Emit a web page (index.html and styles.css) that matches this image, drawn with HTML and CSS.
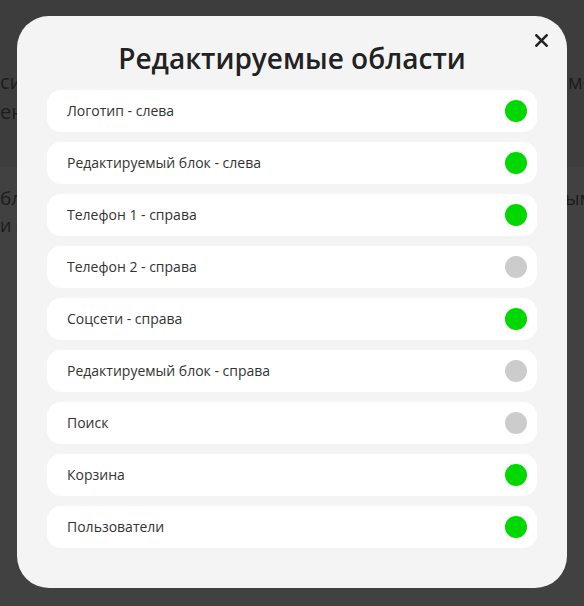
FILE: index.html
```html
<!DOCTYPE html>
<html lang="ru">
<head>
<meta charset="utf-8">
<link rel="stylesheet" href="styles.css">
</head>
<body>
<div class="page">
  <section class="bg-sec bg-top">
    <div class="bg-line l1"><span class="lt">сирование шаблона</span><span class="r">можно</span></div>
    <div class="bg-line l2"><span class="lt">ения сайта</span></div>
  </section>
  <section class="bg-sec bg-bottom">
    <div class="bg-line l3"><span class="lt">блоки шаблона</span><span class="r">ымые</span></div>
    <div class="bg-line l4"><span class="lt">и страницы</span></div>
  </section>
</div>
<div class="overlay">
  <div class="modal">
    <button class="close" aria-label="Закрыть">
      <svg width="13" height="13" viewBox="0 0 13 13"><path d="M1.4 1.4 L11.6 11.6 M11.6 1.4 L1.4 11.6" stroke="#222" stroke-width="2.5" stroke-linecap="square" fill="none"/></svg>
    </button>
    <h1 class="title">Редактируемые области</h1>
    <ul class="list">
      <li class="row"><span>Логотип - слева</span><i class="dot on"></i></li>
      <li class="row"><span>Редактируемый блок - слева</span><i class="dot on"></i></li>
      <li class="row"><span>Телефон 1 - справа</span><i class="dot on"></i></li>
      <li class="row"><span>Телефон 2 - справа</span><i class="dot off"></i></li>
      <li class="row"><span>Соцсети - справа</span><i class="dot on"></i></li>
      <li class="row"><span>Редактируемый блок - справа</span><i class="dot off"></i></li>
      <li class="row"><span>Поиск</span><i class="dot off"></i></li>
      <li class="row"><span>Корзина</span><i class="dot on"></i></li>
      <li class="row"><span>Пользователи</span><i class="dot on"></i></li>
    </ul>
  </div>
</div>
</body>
</html>
```
FILE: styles.css
```css
* { box-sizing: border-box; }
html, body { margin: 0; padding: 0; }
body {
  width: 584px;
  height: 606px;
  overflow: hidden;
  background: #404040;
  font-family: "Open Sans", "Liberation Sans", sans-serif;
}
.page { height: 606px; }
.bg-sec { overflow: hidden; }
.bg-top { background: #3d3d3d; height: 167px; padding-top: 67px; }
.bg-bottom { background: #414141; height: 439px; padding-top: 18px; }
.bg-line {
  display: flex;
  color: #1c1c1c;
  font-size: 20px;
  white-space: nowrap;
  width: 700px;
}
.bg-line .lt {
  flex: none;
  width: 568px;
  overflow: hidden;
}
.bg-line .r { flex: none; }
.l1 { height: 30px; line-height: 30px; }
.l2 { height: 30px; line-height: 30px; }
.l3 { height: 27px; line-height: 27px; font-size: 19px; }
.l3 .lt { width: 565px; }
.l4 { height: 27px; line-height: 27px; font-size: 18px; }

.overlay {
  position: fixed;
  inset: 0;
  display: flex;
  align-items: flex-start;
  justify-content: flex-start;
  padding: 16px 17px;
}
.modal {
  position: relative;
  width: 550px;
  height: 572px;
  background: #f4f4f4;
  border-radius: 32px;
  padding: 24px 30px 40px;
}
.close {
  position: absolute;
  top: 18px;
  right: 19px;
  width: 13px;
  height: 13px;
  padding: 0;
  border: 0;
  background: none;
  display: block;
}
.close svg { display: block; }
.title {
  margin: 0 0 12px;
  text-align: center;
  font-size: 28px;
  font-weight: 600;
  line-height: 38px;
  color: #222;
  position: relative;
  top: -1px;
}
.list {
  list-style: none;
  margin: 0;
  padding: 0;
  display: flex;
  flex-direction: column;
  gap: 10px;
}
.row {
  height: 42px;
  background: #fff;
  border-radius: 14px;
  display: flex;
  align-items: center;
  justify-content: space-between;
  padding: 0 10px 0 20px;
  font-size: 14px;
  line-height: 20px;
  color: #333;
}
.dot {
  width: 22px;
  height: 22px;
  border-radius: 50%;
  display: block;
}
.dot.on { background: #00d800; }
.dot.off { background: #cccccc; }
```
